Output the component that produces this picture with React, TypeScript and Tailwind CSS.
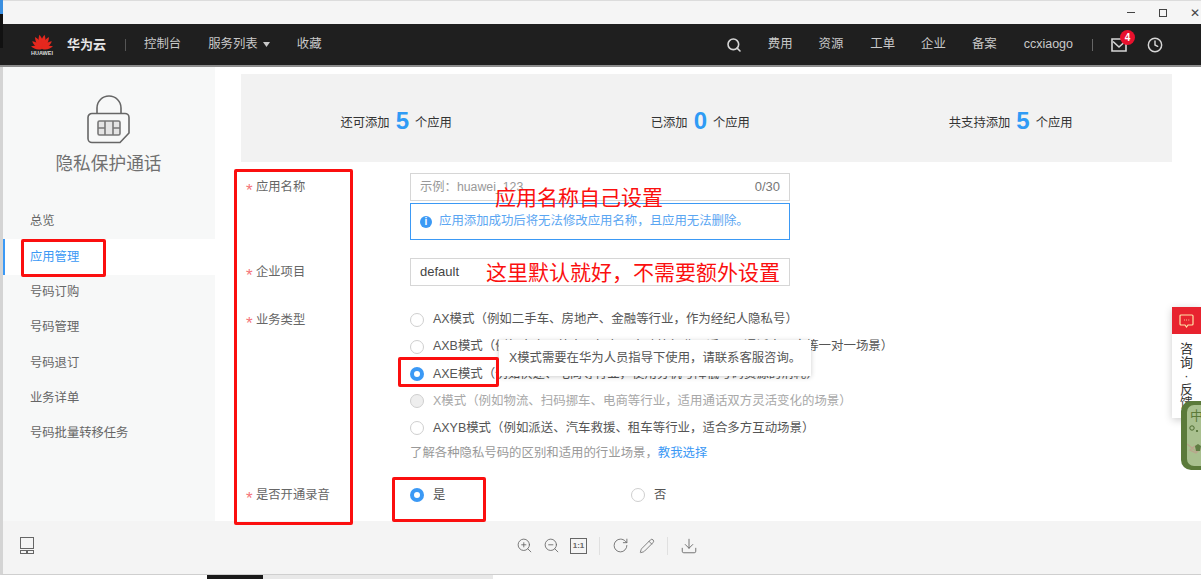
import { Clock, Download, Pencil, RotateCw, Search, ZoomIn, ZoomOut } from 'lucide-react';

const topNav = [
  { label: '费用', ml: 'ml-[26px]' },
  { label: '资源', ml: 'ml-[26px]' },
  { label: '工单', ml: 'ml-[27px]' },
  { label: '企业', ml: 'ml-[26px]' },
  { label: '备案', ml: 'ml-[26px]' },
];

const sideNav = ['总览', '应用管理', '号码订购', '号码管理', '号码退订', '业务详单', '号码批量转移任务'];

const radios = [
  { label: 'AX模式（例如二手车、房地产、金融等行业，作为经纪人隐私号）' },
  { label: 'AXB模式（例如电商、外卖、打车、家政等行业，适用于通话人固定等一对一场景）' },
  { label: 'AXE模式（例如快递、电商等行业，使用分机号降低号码资源的消耗）', checked: true },
  { label: 'X模式（例如物流、扫码挪车、电商等行业，适用通话双方灵活变化的场景）', disabled: true },
  { label: 'AXYB模式（例如派送、汽车救援、租车等行业，适合多方互动场景）' },
];

function Radio({ checked, disabled }: { checked?: boolean; disabled?: boolean }) {
  if (checked) {
    return (
      <span className="flex h-[14px] w-[14px] shrink-0 items-center justify-center rounded-full bg-[#3b99f5]">
        <span className="h-[6px] w-[6px] rounded-full bg-white" />
      </span>
    );
  }
  return (
    <span
      className={`h-[14px] w-[14px] shrink-0 rounded-full border border-[#cfcfcf] ${disabled ? 'bg-[#eeeeee]' : 'bg-white'}`}
    />
  );
}

function HuaweiLogo() {
  const petals = [
    { a: -76, s: 0.78 },
    { a: -52, s: 0.86 },
    { a: -30, s: 0.95 },
    { a: -10, s: 1 },
    { a: 10, s: 1 },
    { a: 30, s: 0.95 },
    { a: 52, s: 0.86 },
    { a: 76, s: 0.78 },
  ];
  return (
    <svg width="24" height="17" viewBox="0 0 24 17">
      {petals.map((p) => (
        <path
          key={p.a}
          d="M0 0 C-3.2 -5 -2.4 -10.5 0 -14.5 C2.4 -10.5 3.2 -5 0 0 Z"
          fill="#e5281e"
          transform={`translate(12 16) rotate(${p.a}) scale(${p.s})`}
        />
      ))}
    </svg>
  );
}

function LockIcon() {
  return (
    <svg width="44" height="50" viewBox="0 0 44 50" fill="none" stroke="#666" strokeWidth="1.6">
      <path d="M10 19 V13 a12 12 0 0 1 24 0 V19" />
      <path d="M5 18.5 H38 a4 4 0 0 1 4 4 V38 L33 47.5 H5 a4 4 0 0 1 -4 -4 V22.5 a4 4 0 0 1 4 -4 Z" />
      <rect x="11" y="26" width="22" height="14" rx="1.5" fill="#e4e4e4" stroke="#777" />
      <path d="M18 26 V40 M26 26 V40 M11 33 H18 M26 33 H33" stroke="#777" />
    </svg>
  );
}

function MailIcon() {
  return (
    <svg width="16" height="14" viewBox="0 0 16 14" fill="none" stroke="#d6d6d6" strokeWidth="1.6">
      <path d="M11 1 H1 V13 H15 V6" />
      <path d="M2 3.5 L8 9 L12.5 5" />
    </svg>
  );
}

function LayoutIcon() {
  return (
    <svg width="16" height="17" viewBox="0 0 16 17" fill="none" stroke="#666" strokeWidth="1">
      <rect x="1.5" y="0.5" width="13" height="11" />
      <rect x="1.5" y="13.5" width="6" height="3" />
      <rect x="8.5" y="13.5" width="6" height="3" />
    </svg>
  );
}

function ChatIcon() {
  return (
    <svg width="15" height="14" viewBox="0 0 15 14" fill="none" stroke="#ffe3a8" strokeWidth="1.2">
      <path d="M2 1 H13 a1 1 0 0 1 1 1 V10 a1 1 0 0 1 -1 1 H9 L7.5 13 L6 11 H2 a1 1 0 0 1 -1 -1 V2 a1 1 0 0 1 1 -1 Z" />
      <path d="M5 6 H5.8 M7.2 6 H8 M9.4 6 H10.2" strokeWidth="1.1" />
    </svg>
  );
}

function Stat({ before, value }: { before: string; value: number }) {
  return (
    <div className="flex items-center text-[12.3px] text-[#333]">
      <span>{before}</span>
      <span className="mx-[6px] -mt-[5px] text-[24px] leading-none font-bold text-[#2f9bf5]">{value}</span>
      <span>个应用</span>
    </div>
  );
}

function FieldLabel({ text }: { text: string }) {
  return (
    <div className="flex h-[18px] w-[169px] shrink-0 items-center pl-[5px] text-[12.3px] leading-[18px] text-[#666]">
      <span className="mt-[2px] mr-[3px] h-[13px] w-[7px] text-[17px] leading-none text-[#f5757a]">*</span>
      {text}
    </div>
  );
}

function RedBox({ className }: { className: string }) {
  return <div className={`pointer-events-none absolute rounded-[2px] border-[3px] border-[#fb0f0f] ${className}`} />;
}

export default function App() {
  return (
    <div className="relative flex h-[579px] w-[1201px] flex-col overflow-hidden bg-white font-['Liberation_Sans','Noto_Sans_CJK_SC',sans-serif]">
      {/* window title strip */}
      <div className="flex h-[24px] shrink-0 items-center justify-end border-t border-[#dcdcdc] bg-[#f5f5f5] pr-[1px]">
        <span className="h-px w-[8px] bg-[#444]" />
        <span className="ml-[24px] h-[8px] w-[8px] border border-[#444]" />
        <span className="ml-[23px] text-[12px] leading-none text-[#444]">✕</span>
      </div>

      {/* console header */}
      <header className="flex h-[43px] shrink-0 items-center border-b-2 border-[#8c8c8c] bg-[#1f1f1f] pl-[30px] text-[12.4px] text-[#c9c9c9]">
        <div className="flex w-[24px] flex-col items-center">
          <HuaweiLogo />
          <span className="mt-[1px] text-[5.5px] leading-none font-bold text-[#dddddd]">HUAWEI</span>
        </div>
        <span className="ml-[13px] text-[13px] font-bold text-[#e6e6e6]">华为云</span>
        <span className="ml-[19px] h-[12px] w-px bg-[#555]" />
        <span className="ml-[18px]">控制台</span>
        <span className="ml-[27px]">服务列表</span>
        <svg className="ml-[5px]" width="7" height="5" viewBox="0 0 7 5">
          <path d="M0 0 H7 L3.5 5 Z" fill="#c9c9c9" />
        </svg>
        <span className="ml-[27px]">收藏</span>
        <div className="flex-1" />
        <Search className="h-[16px] w-[16px] text-[#d6d6d6]" strokeWidth={2.4} />
        {topNav.map((item) => (
          <span key={item.label} className={item.ml}>
            {item.label}
          </span>
        ))}
        <span className="ml-[27px] text-[12.5px]">ccxiaogo</span>
        <span className="ml-[19px] h-[12px] w-px bg-[#666]" />
        <span className="relative ml-[18px] flex">
          <MailIcon />
          <span className="absolute -top-[8px] left-[9px] flex h-[15px] w-[15px] items-center justify-center rounded-full bg-[#e8112d] text-[10px] font-bold text-white">
            4
          </span>
        </span>
        <Clock className="mr-[38px] ml-[20px] h-[16px] w-[16px] text-[#d6d6d6]" strokeWidth={2.2} />
      </header>

      <div className="flex min-h-0 flex-1">
        {/* side menu */}
        <aside className="flex w-[215px] shrink-0 flex-col border-l-[3px] border-[#d4d4d4] bg-[#f7f8f8]">
          <div className="flex flex-col items-center pt-[28px] pr-[1px]">
            <LockIcon />
            <span className="mt-[6px] text-[17.7px] leading-[26px] text-[#707070]">隐私保护通话</span>
          </div>
          <nav className="mt-[27px] flex flex-col">
            {sideNav.map((item) => {
              const active = item === '应用管理';
              return (
                <div
                  key={item}
                  className={`flex h-[35.3px] items-center text-[12.3px] ${
                    active ? 'border-l-[2px] border-[#3b99f5] bg-white pl-[25px] text-[#3b99f5]' : 'pl-[27px] text-[#666]'
                  }`}
                >
                  {item}
                </div>
              );
            })}
          </nav>
        </aside>

        {/* form area */}
        <main className="min-w-0 flex-1 overflow-hidden pt-[7px] pl-[26px]">
          <div className="flex h-[88px] w-[931px] items-center justify-around bg-[#f2f2f2] pt-[10px]">
            <Stat before="还可添加" value={5} />
            <Stat before="已添加" value={0} />
            <Stat before="共支持添加" value={5} />
          </div>

          <div className="mt-[11px] flex items-start">
            <div className="pt-[5px]">
              <FieldLabel text="应用名称" />
            </div>
            <div className="w-[380px]">
              <div className="flex h-[28px] items-center justify-between border border-[#d6d6d6] px-[9px] text-[12.3px] text-[#999]">
                <span>示例：huawei_123</span>
                <span className="text-[13px] text-[#777]">0/30</span>
              </div>
              <div className="mt-[2px] flex h-[37px] items-center border border-[#3b99f5] pl-[9px] text-[12.4px] text-[#5ba6f2]">
                <span className="mr-[7px] flex h-[12px] w-[12px] items-center justify-center rounded-full bg-[#3b99f5] text-[10px] font-bold text-white">
                  i
                </span>
                应用添加成功后将无法修改应用名称，且应用无法删除。
              </div>
            </div>
          </div>

          <div className="mt-[18px] flex items-center">
            <FieldLabel text="企业项目" />
            <div className="flex h-[28px] w-[380px] items-center border border-[#d6d6d6] px-[9px] text-[13px] text-[#444]">
              default
            </div>
          </div>

          <div className="mt-[20px] flex items-start">
            <div className="pt-[5px]">
              <FieldLabel text="业务类型" />
            </div>
            <div className="flex flex-col">
              {radios.map((r) => (
                <div
                  key={r.label}
                  className={`flex h-[27.2px] items-center gap-[9px] text-[12.45px] whitespace-nowrap ${
                    r.disabled ? 'text-[#a8a8a8]' : 'text-[#555]'
                  }`}
                >
                  <Radio checked={r.checked} disabled={r.disabled} />
                  {r.label}
                </div>
              ))}
              <div className="mt-[2px] text-[12.4px] leading-[18px] text-[#999]">
                了解各种隐私号码的区别和适用的行业场景，<span className="text-[#3b99f5]">教我选择</span>
              </div>
            </div>
          </div>

          <div className="mt-[24px] flex items-center">
            <FieldLabel text="是否开通录音" />
            <div className="flex w-[221px] items-center gap-[9px] text-[12.3px] text-[#555]">
              <Radio checked />是
            </div>
            <div className="flex items-center gap-[9px] text-[12.3px] text-[#555]">
              <Radio />否
            </div>
          </div>
        </main>
      </div>

      {/* image viewer toolbar */}
      <footer className="flex h-[54px] shrink-0 items-center border-b border-l-[3px] border-b-[#cfcfcf] border-l-[#d4d4d4] bg-[#f4f4f4] pb-[4px] pl-[16px] text-[#666]">
        <LayoutIcon />
        <ZoomIn className="ml-[481px] h-[17px] w-[17px]" strokeWidth={1.2} />
        <ZoomOut className="ml-[10px] h-[17px] w-[17px]" strokeWidth={1.2} />
        <span className="ml-[10px] flex h-[16px] w-[17px] items-center justify-center border border-[#666] text-[8px] font-bold">
          1:1
        </span>
        <span className="ml-[12px] h-[18px] w-px bg-[#e0e0e0]" />
        <RotateCw className="ml-[12px] h-[17px] w-[17px]" strokeWidth={1.2} />
        <Pencil className="ml-[10px] h-[16px] w-[16px]" strokeWidth={1.2} />
        <span className="ml-[12px] h-[18px] w-px bg-[#e0e0e0]" />
        <Download className="ml-[12px] h-[18px] w-[18px]" strokeWidth={1.2} />
      </footer>
      <div className="flex h-[4px] shrink-0 bg-white pl-[207px]">
        <span className="h-full w-[56px] bg-[#1a1a1a]" />
        <span className="h-full w-[230px] bg-[#e8e8e8]" />
      </div>

      {/* tooltip over the AXB/AXE rows */}
      <div className="absolute top-[340px] left-[499px] flex h-[36px] w-[312px] items-center bg-white pl-[10px] text-[12.35px] text-[#555] shadow-[0_1px_5px_rgba(0,0,0,0.2)]">
        X模式需要在华为人员指导下使用，请联系客服咨询。
      </div>

      {/* red annotations drawn on the screenshot */}
      <RedBox className="top-[239px] left-[21px] h-[38px] w-[85px]" />
      <RedBox className="top-[169px] left-[234px] h-[356px] w-[119px]" />
      <RedBox className="top-[357px] left-[398px] h-[30px] w-[101px]" />
      <RedBox className="top-[477px] left-[392px] h-[45px] w-[94px]" />
      <span className="absolute top-[184px] left-[495px] text-[21px] leading-[28px] text-[#fb0f0f]">应用名称自己设置</span>
      <span className="absolute top-[259px] left-[486px] text-[21px] leading-[28px] text-[#fb0f0f]">这里默认就好，不需要额外设置</span>

      {/* floating feedback tab */}
      <div className="absolute top-[307px] left-[1172px] h-[111px] w-[29px] bg-white shadow-[0_2px_8px_rgba(0,0,0,0.2)]">
        <div className="flex h-[27px] items-center justify-center bg-[#e8232f]">
          <ChatIcon />
        </div>
        <div className="pt-[8px] text-center text-[13px] leading-[13.5px] text-[#333]">
          咨<br />询<br />·<br />反<br />馈
        </div>
      </div>
      <div className="absolute top-[401px] left-[1181px] h-[69px] w-[30px] rounded-[10px] bg-[#5b7a3a] py-[4px] pl-[6px]">
        <div className="h-full rounded-[7px] bg-[#a9c08f] pt-[4px] pl-[3px] text-[13px] leading-none text-[#5b7a3a]">
          中
          <svg className="-ml-[3px] mt-[3px]" width="16" height="34" viewBox="0 0 16 34" fill="none">
            <circle cx="5" cy="3" r="2.2" stroke="#4d6a30" />
            <circle cx="10" cy="6" r="1.1" fill="#4d6a30" />
            <path d="M0 19 L10 27 M3 25 L8 21 L13 24 L9 28 Z" stroke="#b9a58c" strokeWidth="1.3" />
            <path d="M8 21 L11 19 L14 21 L13 26 L9 26 Z" fill="#5f7d42" />
          </svg>
        </div>
      </div>

      {/* window edge bits at the top left */}
      <div className="absolute top-0 left-0 h-[14px] w-[3px] bg-[#3b8fe0]" />
      <div className="absolute top-[14px] left-0 h-[34px] w-[3px] bg-[#111]" />
    </div>
  );
}
